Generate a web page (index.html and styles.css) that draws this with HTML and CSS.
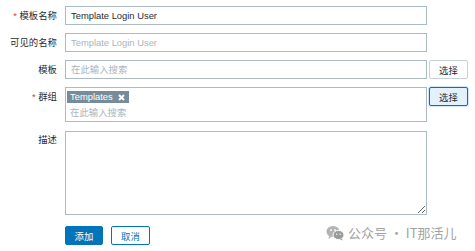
FILE: index.html
```html
<!DOCTYPE html>
<html lang="zh">
<head>
    <meta charset="UTF-8">
    <title>Template</title>
    <link rel="stylesheet" href="styles.css">
</head>
<body>
    <form class="form">
        <div class="row">
            <label class="label"><span class="req">*</span> 模板名称</label>
            <input class="field" type="text" value="Template Login User">
        </div>
        <div class="row">
            <label class="label">可见的名称</label>
            <input class="field" type="text" placeholder="Template Login User">
        </div>
        <div class="row">
            <label class="label">模板</label>
            <input class="field" type="text" placeholder="在此输入搜索">
            <button type="button" class="pick">选择</button>
        </div>
        <div class="row">
            <label class="label"><span class="req">*</span> 群组</label>
            <div class="multi">
                <span class="tag">Templates
                    <svg class="tag-x" width="7" height="7" viewBox="0 0 7 7"><path d="M1 1L6 6M6 1L1 6" stroke="#fff" stroke-width="2"/></svg>
                </span>
                <input class="multi-input" type="text" placeholder="在此输入搜索">
            </div>
            <button type="button" class="pick pick-focus">选择</button>
        </div>
        <div class="row">
            <label class="label">描述</label>
            <textarea class="field area"></textarea>
        </div>
        <div class="actions">
            <button type="button" class="btn-main">添加</button>
            <button type="button" class="btn-alt">取消</button>
        </div>
    </form>
    <div class="watermark">
        <svg width="19" height="16" viewBox="0 0 19 16">
            <ellipse cx="7" cy="6.5" rx="6.5" ry="5.5" fill="#b3b3b3"/>
            <path d="M3 11l-0.5 3 3-2z" fill="#b3b3b3"/>
            <ellipse cx="12.5" cy="10" rx="5.5" ry="4.6" fill="#9a9a9a" stroke="#fff" stroke-width="1"/>
            <path d="M15.5 13.5l1.5 2-3-1z" fill="#9a9a9a"/>
            <circle cx="5" cy="5" r="0.9" fill="#fff"/>
            <circle cx="9" cy="5" r="0.9" fill="#fff"/>
            <circle cx="10.8" cy="9.3" r="0.7" fill="#fff"/>
            <circle cx="14.2" cy="9.3" r="0.7" fill="#fff"/>
        </svg>
        <span>公众号 · IT那活儿</span>
    </div>
</body>
</html>
```

FILE: styles.css
```css
body {
    margin: 0;
    background: #fff;
    color: #1f2c33;
    font-family: "Liberation Sans", "Noto Sans CJK SC", sans-serif;
    font-size: 9.4px;
}

.form {
    display: flex;
    flex-direction: column;
    gap: 8px;
    padding-top: 6px;
}

.row {
    display: flex;
    align-items: flex-start;
}

.label {
    width: 57px;
    margin-right: 8px;
    text-align: right;
    line-height: 19px;
    white-space: nowrap;
}

.req {
    color: #e33734;
}

.field {
    box-sizing: border-box;
    width: 362px;
    height: 19px;
    margin: 0;
    padding: 0 5px;
    border: 1px solid #acbbc2;
    border-radius: 0;
    font: inherit;
    color: #1f2c33;
    outline: none;
}

.field::placeholder,
.multi-input::placeholder {
    color: #a9b6bc;
}

.area {
    height: 84px;
    margin-top: 1px;
    padding: 3px 5px;
    resize: vertical;
}

.pick {
    box-sizing: border-box;
    width: 39px;
    height: 19px;
    margin: 0 0 0 2px;
    padding: 0;
    border: 1px solid #c7d1d6;
    border-radius: 2px;
    background: #fff;
    color: #1f2c33;
    font: inherit;
}

.pick-focus {
    border-color: #0275b8;
    background: #e4f1fb;
    box-shadow: 0 0 0 1px #cfe6f6;
}

.multi {
    box-sizing: border-box;
    width: 362px;
    height: 35px;
    padding: 3px 1px 1px 1px;
    border: 1px solid #acbbc2;
    display: flex;
    flex-direction: column;
    align-items: flex-start;
    gap: 1px;
}

.tag {
    display: inline-flex;
    align-items: center;
    gap: 5px;
    height: 12px;
    padding: 0 4px 0 3px;
    background: #768d99;
    color: #fff;
    line-height: 12px;
}

.multi-input {
    box-sizing: border-box;
    width: 100%;
    height: 16px;
    margin: 0;
    padding: 0 3px;
    border: none;
    font: inherit;
    outline: none;
}

.actions {
    display: flex;
    gap: 8px;
    margin: 3px 0 0 65px;
}

.btn-main,
.btn-alt {
    box-sizing: border-box;
    height: 19px;
    padding: 0;
    border: 1px solid #0275b8;
    border-radius: 2px;
    font: inherit;
}

.btn-main {
    width: 38px;
    background: #0275b8;
    color: #fff;
}

.btn-alt {
    width: 39px;
    background: #fff;
    color: #0275b8;
}

.watermark {
    position: absolute;
    left: 326px;
    top: 223px;
    display: flex;
    align-items: center;
    gap: 3px;
    color: #a3a3a3;
    font-size: 13px;
    font-family: "Noto Sans CJK SC", sans-serif;
}
```
